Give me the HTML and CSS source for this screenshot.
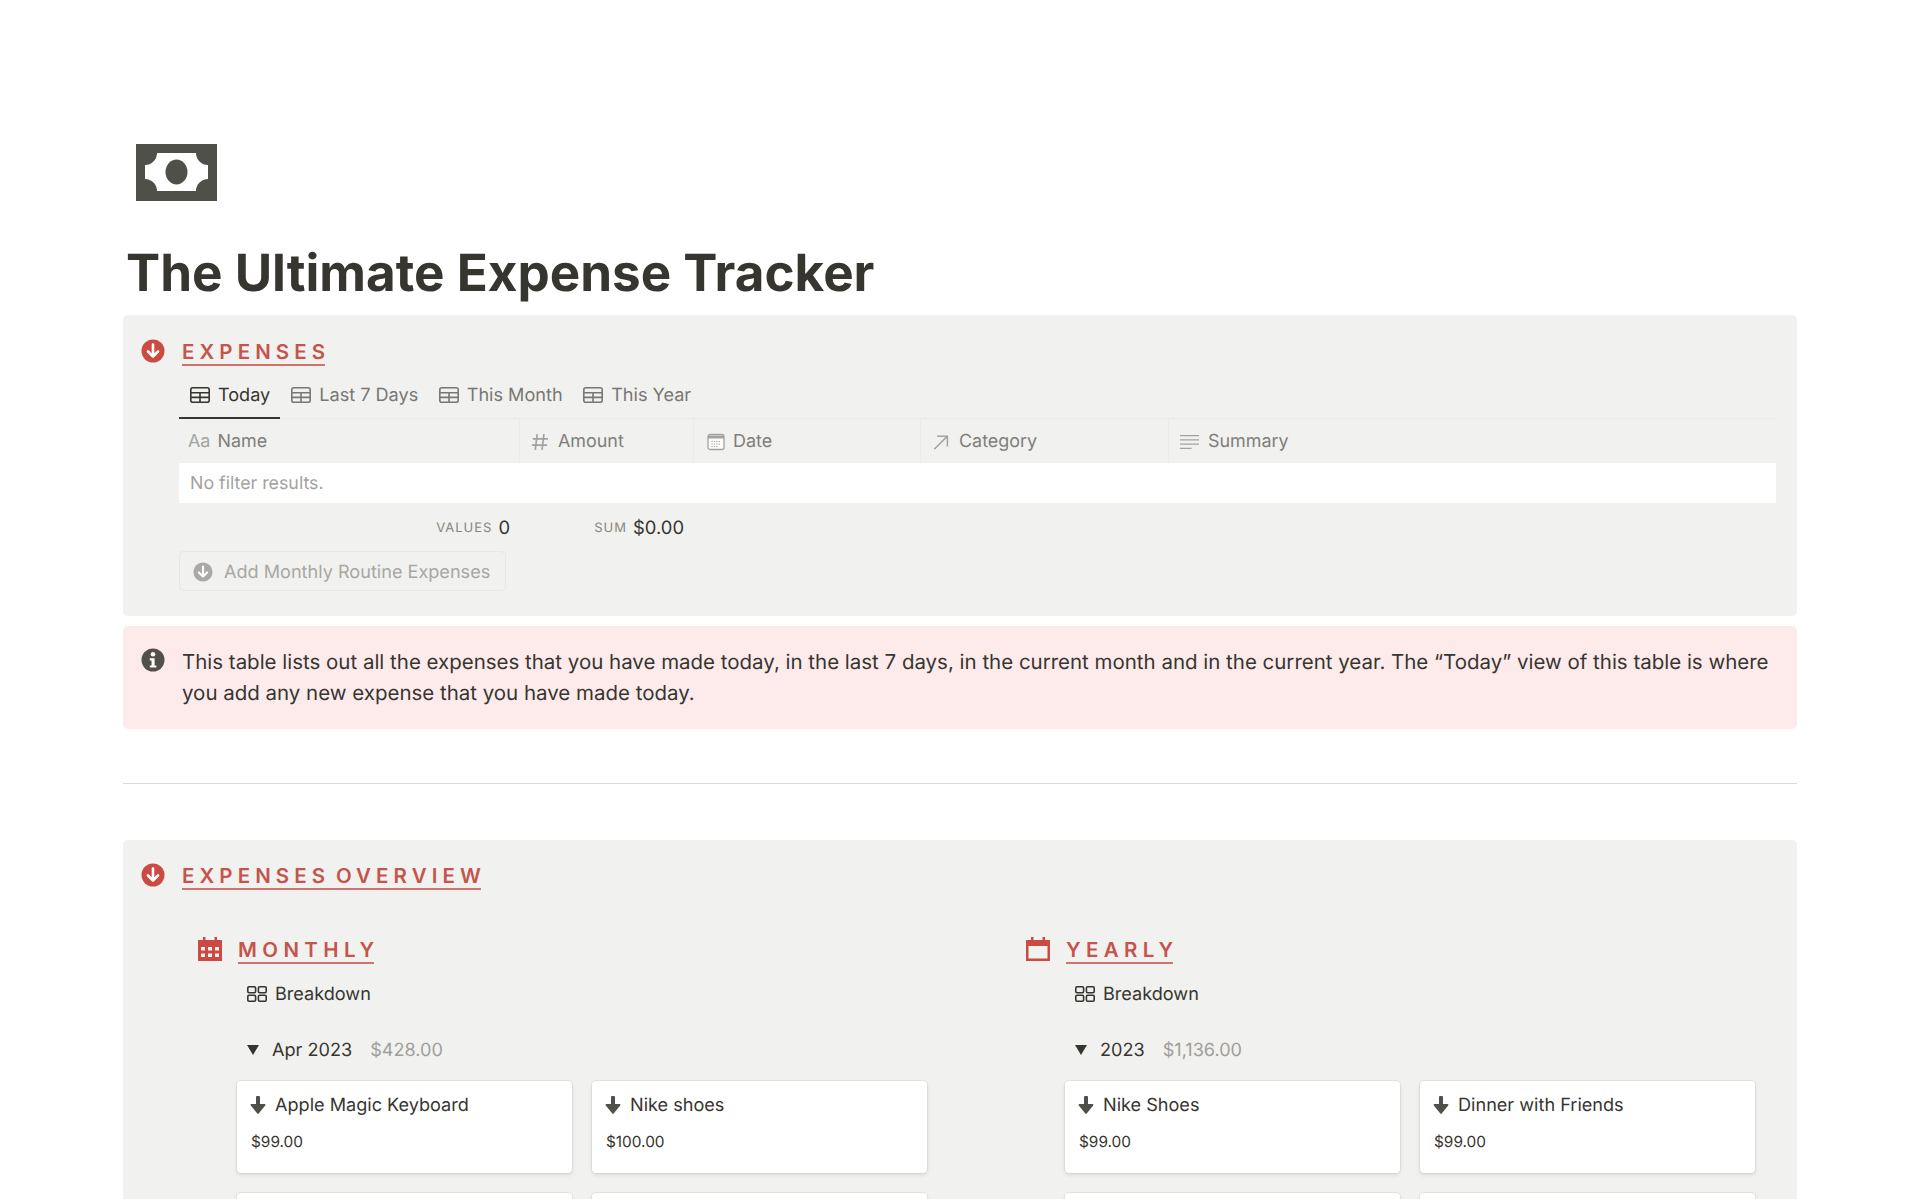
FILE: index.html
```html
<!DOCTYPE html>
<html lang="en">
<head>
<meta charset="utf-8">
<title>The Ultimate Expense Tracker</title>
<link rel="stylesheet" href="styles.css">
</head>
<body>
<svg class="defs" width="0" height="0" aria-hidden="true">
  <defs>
    <symbol id="i-table" viewBox="0 0 20 16"><rect x=".8" y=".8" width="18.4" height="14.4" rx="2" fill="none" stroke="currentColor" stroke-width="1.6"/><path d="M1 5.800h18M1 10.400h18M10 5.800v9.400" fill="none" stroke="currentColor" stroke-width="1.6"/></symbol>
    <symbol id="i-down" viewBox="0 0 24 24"><circle cx="12" cy="12" r="11.5" fill="currentColor"/><path d="M12 5.5v12M7 12.5l5 5 5-5" fill="none" stroke="#fff" stroke-width="2.6" stroke-linecap="round" stroke-linejoin="round"/></symbol>
    <symbol id="i-gallery" viewBox="0 0 20 16"><g fill="none" stroke="currentColor" stroke-width="1.6"><rect x=".8" y=".8" width="7.8" height="6" rx="1.2"/><rect x="11.4" y=".8" width="7.8" height="6" rx="1.2"/><rect x=".8" y="9.200" width="7.800" height="6" rx="1.2"/><rect x="11.4" y="9.200" width="7.800" height="6" rx="1.2"/></g></symbol>
    <symbol id="i-arrow" viewBox="0 0 16 18"><path d="M6 1.2C6 .5 6.5 0 7.2 0h1.6C9.500 0 10 .5 10 1.200V8h4.500c.9 0 1.300 1 .7 1.600l-6.500 7.900c-.4.500-1 .500-1.400 0L.8 9.600C.2 9 .6 8 1.500 8H6z" fill="currentColor"/></symbol>
  </defs>
</svg>
<main class="page">
  <header class="page-head">
    <svg class="page-icon" viewBox="0 0 81 57" aria-hidden="true">
      <rect width="81" height="57" fill="#50504a"/>
      <path d="M21 9H60A12 12 0 0 0 72 21V35A12 12 0 0 0 60 47H21A12 12 0 0 0 9 35V21A12 12 0 0 0 21 9Z" fill="#fff"/>
      <ellipse cx="40.500" cy="28" rx="11" ry="12.500" fill="#50504a"/>
    </svg>
    <h1 class="title">The Ultimate Expense Tracker</h1>
  </header>

  <section class="panel panel-expenses">
    <svg class="mark"><use href="#i-down"/></svg>
    <div class="panel-body">
      <h2 class="heading"><span class="rule"><span class="rule-text">EXPENSES</span></span></h2>
      <nav class="tabs">
        <a class="tab tab-active"><svg class="tab-icon"><use href="#i-table"/></svg>Today</a>
        <a class="tab"><svg class="tab-icon"><use href="#i-table"/></svg>Last 7 Days</a>
        <a class="tab"><svg class="tab-icon"><use href="#i-table"/></svg>This Month</a>
        <a class="tab"><svg class="tab-icon"><use href="#i-table"/></svg>This Year</a>
      </nav>
      <div class="grid-row table-head">
        <div class="th"><span class="aa">Aa</span>Name</div>
        <div class="th"><svg class="th-icon" viewBox="0 0 16 16"><path d="M5.500 1 3.800 15M11.500 1 9.800 15M1.500 5.300h13.500M.8 10.700h13.500" fill="none" stroke="currentColor" stroke-width="1.500"/></svg>Amount</div>
        <div class="th th-date"><svg class="th-icon" viewBox="0 0 18 18"><rect x="1" y="1.500" width="16" height="15" rx="2" fill="#fbfbfa" stroke="currentColor" stroke-width="1.300"/><path d="M1 2.500h16v3H1z" fill="currentColor"/><path d="M4.500 8.500h9M4.500 11h9M4.500 13.500h6" stroke="currentColor" stroke-width="1" stroke-dasharray="1.200 1.200" fill="none"/></svg>Date</div>
        <div class="th"><svg class="th-icon" viewBox="0 0 16 16"><path d="M2 14.500 13.500 3M4.500 2.800h9.200V12" fill="none" stroke="currentColor" stroke-width="1.300"/></svg>Category</div>
        <div class="th"><svg class="th-icon th-icon-wide" viewBox="0 0 18 16"><path d="M0 2h18M0 6h18M0 10h18M0 14h11" fill="none" stroke="currentColor" stroke-width="1.200"/></svg>Summary</div>
      </div>
      <div class="empty-row">No filter results.</div>
      <div class="grid-row table-foot">
        <div class="calc"><span class="calc-label">VALUES</span>0</div>
        <div class="calc"><span class="calc-label">SUM</span>$0.00</div>
      </div>
      <button class="routine" type="button"><svg class="routine-icon"><use href="#i-down"/></svg>Add Monthly Routine Expenses</button>
    </div>
  </section>

  <aside class="callout">
    <svg class="mark mark-info" viewBox="0 0 24 24" aria-hidden="true"><circle cx="12" cy="12" r="11.500" fill="currentColor"/><circle cx="12" cy="6.300" r="2.300" fill="#fff"/><path d="M8.800 10.200h4.800v7.200h1.800v2.200H8.800v-2.200h1.800v-5H8.800z" fill="#fff"/></svg>
    <p class="callout-text">This table lists out all the expenses that you have made today, in the last 7 days, in the current month and in the current year. The “Today” view of this table is where you add any new expense that you have made today.</p>
  </aside>

  <hr class="divider">

  <section class="panel panel-overview">
    <svg class="mark"><use href="#i-down"/></svg>
    <div class="panel-body">
      <h2 class="heading"><span class="rule"><span class="rule-text">EXPENSES OVERVIEW</span></span></h2>
      <div class="columns">
        <div class="col">
          <h3 class="heading heading-sub">
            <svg class="cal" viewBox="0 0 24 24" aria-hidden="true"><path d="M5 0h2.500v3h9V0H19v3h5v21H0V3h5z" fill="currentColor"/><path d="M3 10h4v3.500H3zM10 10h4v3.500h-4zM17 10h4v3.500h-4zM3 16.500h4V20H3zM10 16.500h4V20h-4zM17 16.500h4V20h-4z" fill="#f1f1ef"/></svg>
            <span class="rule"><span class="rule-text">MONTHLY</span></span>
          </h3>
          <div class="view-head"><svg class="tab-icon"><use href="#i-gallery"/></svg>Breakdown</div>
          <div class="group-head"><span class="tri"></span>Apr 2023<span class="group-sum">$428.00</span></div>
          <div class="cards">
            <article class="card"><div class="card-title"><svg class="card-icon"><use href="#i-arrow"/></svg>Apple Magic Keyboard</div><div class="card-price">$99.00</div></article>
            <article class="card"><div class="card-title"><svg class="card-icon"><use href="#i-arrow"/></svg>Nike shoes</div><div class="card-price">$100.00</div></article>
            <article class="card"></article>
            <article class="card"></article>
          </div>
        </div>
        <div class="col">
          <h3 class="heading heading-sub">
            <svg class="cal" viewBox="0 0 24 24" aria-hidden="true"><path d="M5 0h2.500v3h9V0H19v3h5v21H0V3h5z" fill="currentColor"/><path d="M2.500 9h19v12.500h-19z" fill="#f1f1ef"/></svg>
            <span class="rule"><span class="rule-text">YEARLY</span></span>
          </h3>
          <div class="view-head"><svg class="tab-icon"><use href="#i-gallery"/></svg>Breakdown</div>
          <div class="group-head"><span class="tri"></span>2023<span class="group-sum">$1,136.00</span></div>
          <div class="cards">
            <article class="card"><div class="card-title"><svg class="card-icon"><use href="#i-arrow"/></svg>Nike Shoes</div><div class="card-price">$99.00</div></article>
            <article class="card"><div class="card-title"><svg class="card-icon"><use href="#i-arrow"/></svg>Dinner with Friends</div><div class="card-price">$99.00</div></article>
            <article class="card"></article>
            <article class="card"></article>
          </div>
        </div>
      </div>
    </div>
  </section>
</main>
</body>
</html>
```

FILE: styles.css
```css
* { box-sizing: border-box; }
html, body { margin: 0; height: 1199px; overflow: hidden; background: #fff; }
body { font-family: Inter, "Liberation Sans", sans-serif; color: #37352f; font-size: 18px; text-rendering: geometricPrecision; }
.defs { position: absolute; }
.page { padding: 144px 123px 0; }
.page-icon { display: block; width: 81px; height: 57px; margin-left: 13px; }
.title { margin: 28px 0 0 3px; font-size: 51.2px; line-height: 88px; height: 86px; font-weight: 700; color: #37352f; }

.panel { display: flex; background: #f1f1ef; border-radius: 5px; padding: 0 21px 0 18px; }
.panel-expenses { height: 301px; padding-top: 24px; }
.panel-overview { margin-top: 56px; height: 500px; padding-top: 23px; padding-right: 42px; }
.mark { flex: none; width: 24px; height: 24px; margin-right: 14px; color: #cb4b43; }
.panel-body { flex: 1; min-width: 0; }

.heading { margin: 0 0 0 3px; font-size: 20.48px; line-height: 25px; font-weight: 600; letter-spacing: 5.12px; word-spacing: -4.5px; color: #c4554d; }
.heading-sub { letter-spacing: 5.4px; }
.rule { display: inline-block; border-bottom: 2px solid #d0736d; }
.rule-text { display: inline-block; margin-right: -5.12px; }
.heading-sub .rule-text { margin-right: -5.4px; }

.tabs { display: flex; height: 44px; margin-top: 9px; border-bottom: 1px solid #e9e9e6; }
.tab { display: flex; align-items: center; gap: 8px; height: 44px; padding: 0 9.5px 2px 11px; font-size: 18.1px; color: #787774; border-bottom: 2px solid transparent; }
.tab-active { color: #37352f; border-bottom-color: #37352f; padding-right: 10px; }
.tab-icon { flex: none; width: 20px; height: 16px; }

.grid-row { display: grid; grid-template-columns: 341px 174px 227px 248px 1fr; }
.table-head { height: 44px; }
.th { display: flex; align-items: center; gap: 9px; padding: 1px 0 0 11px; font-size: 17.92px; color: #7f7e7a; border-right: 1px solid #ebebe8; }
.th:first-child { padding-left: 9px; gap: 7px; }
.th:last-child { border-right: 0; }
.th-date { padding-left: 13px; gap: 8px; }
.aa { color: #a3a2a0; }
.th-icon { flex: none; width: 18px; height: 18px; color: #a3a2a0; }
.th-icon-wide { width: 19px; }
.empty-row { height: 40px; background: #fff; padding-left: 11px; font-size: 17.8px; line-height: 42px; color: #a3a2a0; }
.table-foot { height: 48px; }
.calc { display: flex; justify-content: flex-end; align-items: center; gap: 6px; padding: 1px 10px 0 0; font-size: 18.4px; }
.calc-label { font-size: 13px; letter-spacing: 1px; color: #87867f; }
.routine { display: flex; align-items: center; gap: 11px; width: 327px; height: 40px; padding: 1px 0 0 13px; background: transparent; border: 1px solid #e6e6e3; border-radius: 5px; font-family: inherit; font-size: 18.1px; color: #a8a7a3; text-rendering: geometricPrecision; }
.routine-icon { width: 20px; height: 20px; color: #aaa9a6; }

.callout { display: flex; background: #fdebec; border-radius: 5px; margin-top: 10px; height: 103px; padding: 20px 21px 0 18px; }
.mark-info { margin-top: 2px; color: #51504b; }
.callout-text { margin: 0 0 0 3px; font-size: 20.48px; line-height: 31px; }

.divider { border: 0; border-top: 1px solid #dbdbd9; margin: 54px 0 0; height: 1px; }

.columns { display: grid; grid-template-columns: 729px 729px; column-gap: 99px; margin-left: 19px; margin-top: 47px; }
.heading-sub { display: flex; align-items: flex-start; margin: 0; }
.cal { flex: none; width: 24px; height: 24px; margin-right: 16px; color: #cb4b43; }
.view-head { display: flex; align-items: center; gap: 8px; height: 24px; margin: 18px 0 0 49px; font-size: 18.1px; }
.group-head { display: flex; align-items: center; height: 28px; margin: 30px 0 0 49px; font-size: 18.1px; }
.tri { width: 0; height: 0; margin-right: 13px; border-left: 6px solid transparent; border-right: 6px solid transparent; border-top: 10px solid #37352f; }
.group-sum { margin-left: 18px; color: #9f9e9b; }
.cards { display: grid; grid-template-columns: 335px 335px; gap: 20px; margin: 17px 0 0 39px; }
.card { height: 92px; background: #fff; border-radius: 4px; box-shadow: 0 0 0 1px rgba(15,15,15,.05), 0 2px 4px rgba(15,15,15,.1); padding: 14px 14px 0 13px; }
.card-title { display: flex; align-items: center; gap: 9px; height: 20px; font-size: 18.1px; }
.card-icon { flex: none; width: 16px; height: 18px; color: #50504b; }
.card-price { margin: 17px 0 0 1px; font-size: 15.36px; line-height: 20px; }
```
